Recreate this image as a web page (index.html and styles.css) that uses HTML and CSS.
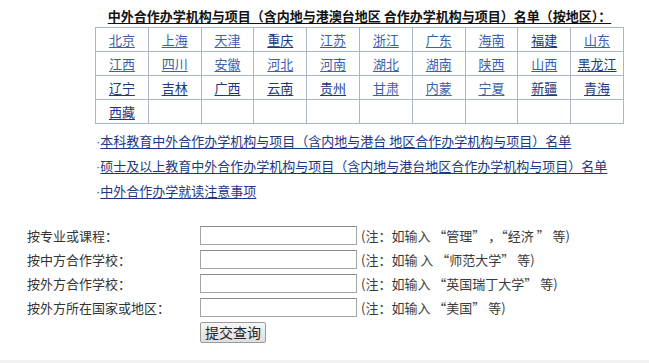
FILE: index.html
```html
<!DOCTYPE html>
<html lang="zh-CN">
<head>
<meta charset="utf-8">
<title>中外合作办学机构与项目</title>
<link rel="stylesheet" href="styles.css">
</head>
<body>
<div class="page">
  <div class="region">
    <div class="title"><u>中外合作办学机构与项目（含内地与港澳台地区 合作办学机构与项目）名单（按地区）：</u></div>
    <table class="grid">
      <tr>
        <td><a href="#" class="lt">北京</a></td><td><a href="#" class="lt">上海</a></td><td><a href="#" class="lt">天津</a></td><td><a href="#">重庆</a></td><td><a href="#" class="lt">江苏</a></td><td><a href="#" class="lt">浙江</a></td><td><a href="#" class="lt">广东</a></td><td><a href="#" class="lt">海南</a></td><td><a href="#">福建</a></td><td><a href="#" class="lt">山东</a></td>
      </tr>
      <tr>
        <td><a href="#" class="lt">江西</a></td><td><a href="#" class="lt">四川</a></td><td><a href="#" class="lt">安徽</a></td><td><a href="#" class="lt">河北</a></td><td><a href="#" class="lt">河南</a></td><td><a href="#" class="lt">湖北</a></td><td><a href="#" class="lt">湖南</a></td><td><a href="#" class="lt">陕西</a></td><td><a href="#" class="lt">山西</a></td><td><a href="#">黑龙江</a></td>
      </tr>
      <tr>
        <td><a href="#">辽宁</a></td><td><a href="#">吉林</a></td><td><a href="#">广西</a></td><td><a href="#">云南</a></td><td><a href="#">贵州</a></td><td><a href="#" class="lt">甘肃</a></td><td><a href="#" class="lt">内蒙</a></td><td><a href="#" class="lt">宁夏</a></td><td><a href="#">新疆</a></td><td><a href="#">青海</a></td>
      </tr>
      <tr>
        <td><a href="#">西藏</a></td><td></td><td></td><td></td><td></td><td></td><td></td><td></td><td></td><td></td>
      </tr>
    </table>
    <ul class="links">
      <li><span class="dot">·</span><a href="#">本科教育中外合作办学机构与项目（含内地与港台 地区合作办学机构与项目）名单</a></li>
      <li><span class="dot">·</span><a href="#">硕士及以上教育中外合作办学机构与项目（含内地与港台地区合作办学机构与项目）名单</a></li>
      <li><span class="dot">·</span><a href="#">中外合作办学就读注意事项</a></li>
    </ul>
  </div>
  <form class="search">
    <label class="lbl">按专业或课程：</label><input class="field" type="text"><span class="note">(注：如输入 “管理” ，“经济 ” 等)</span>
    <label class="lbl">按中方合作学校：</label><input class="field" type="text"><span class="note">(注：如输 入 “师范大学” 等)</span>
    <label class="lbl">按外方合作学校：</label><input class="field" type="text"><span class="note">(注：如输入 “英国瑞丁大学” 等)</span>
    <label class="lbl">按外方所在国家或地区：</label><input class="field" type="text"><span class="note">(注：如输入 “美国” 等)</span>
    <span></span><button class="submit" type="button">提交查询</button><span></span>
  </form>
</div>
</body>
</html>
```
FILE: styles.css
```css
html {
  background: #f2f2f2;
}
body {
  margin: 0;
  background: #ffffff;
  height: 360px;
  font-family: "Noto Sans CJK SC", "Noto Sans", sans-serif;
  font-size: 13px;
  color: #333333;
}
.page {
  display: flex;
  flex-direction: column;
}
.region {
  margin-left: 95px;
  width: 529px;
  display: flex;
  flex-direction: column;
}
.title {
  margin-top: 6px;
  margin-bottom: 1px;
  line-height: 20px;
  text-align: center;
  font-weight: bold;
  color: #111111;
  font-size: 13px;
}
.title u {
  text-underline-offset: 2px;
}
.grid {
  border-collapse: collapse;
  table-layout: fixed;
  width: 529px;
}
.grid td {
  border: 1px solid #aab6c4;
  height: 23px;
  padding: 0;
  text-align: center;
  font-size: 13px;
  line-height: 20px;
}
.grid a {
  color: #1c3784;
  text-decoration: underline;
  text-underline-offset: 2px;
}
.grid a.lt {
  color: #3d60aa;
}
.links {
  list-style: none;
  margin: 5px 0 0 1px;
  padding: 0;
}
.links li {
  line-height: 24px;
  white-space: nowrap;
}
.links .dot {
  font-family: "Liberation Sans", sans-serif;
  color: #555555;
}
.links a {
  color: #1c3784;
  text-decoration: underline;
  text-underline-offset: 2px;
}
.search {
  margin: 22px 0 0 27px;
  display: grid;
  grid-template-columns: 173px 157px auto;
  row-gap: 5px;
  align-items: center;
}
.lbl {
  color: #333333;
  line-height: 19px;
}
.field {
  box-sizing: border-box;
  width: 157px;
  height: 19px;
  margin: 0;
  border: 1px solid #a5a5a5;
  border-top-color: #8a8a8a;
  background: #ffffff;
  padding: 0 2px;
}
.note {
  padding-left: 4px;
  color: #3a3a3a;
  line-height: 19px;
  white-space: nowrap;
}
.submit {
  justify-self: start;
  height: 21px;
  padding: 0 4px;
  border: 1px solid #9a9a9a;
  border-radius: 2px;
  background: linear-gradient(#f6f6f6, #dedede);
  font-family: "Noto Sans CJK SC", sans-serif;
  font-size: 14px;
  line-height: 19px;
  color: #222222;
}
```
